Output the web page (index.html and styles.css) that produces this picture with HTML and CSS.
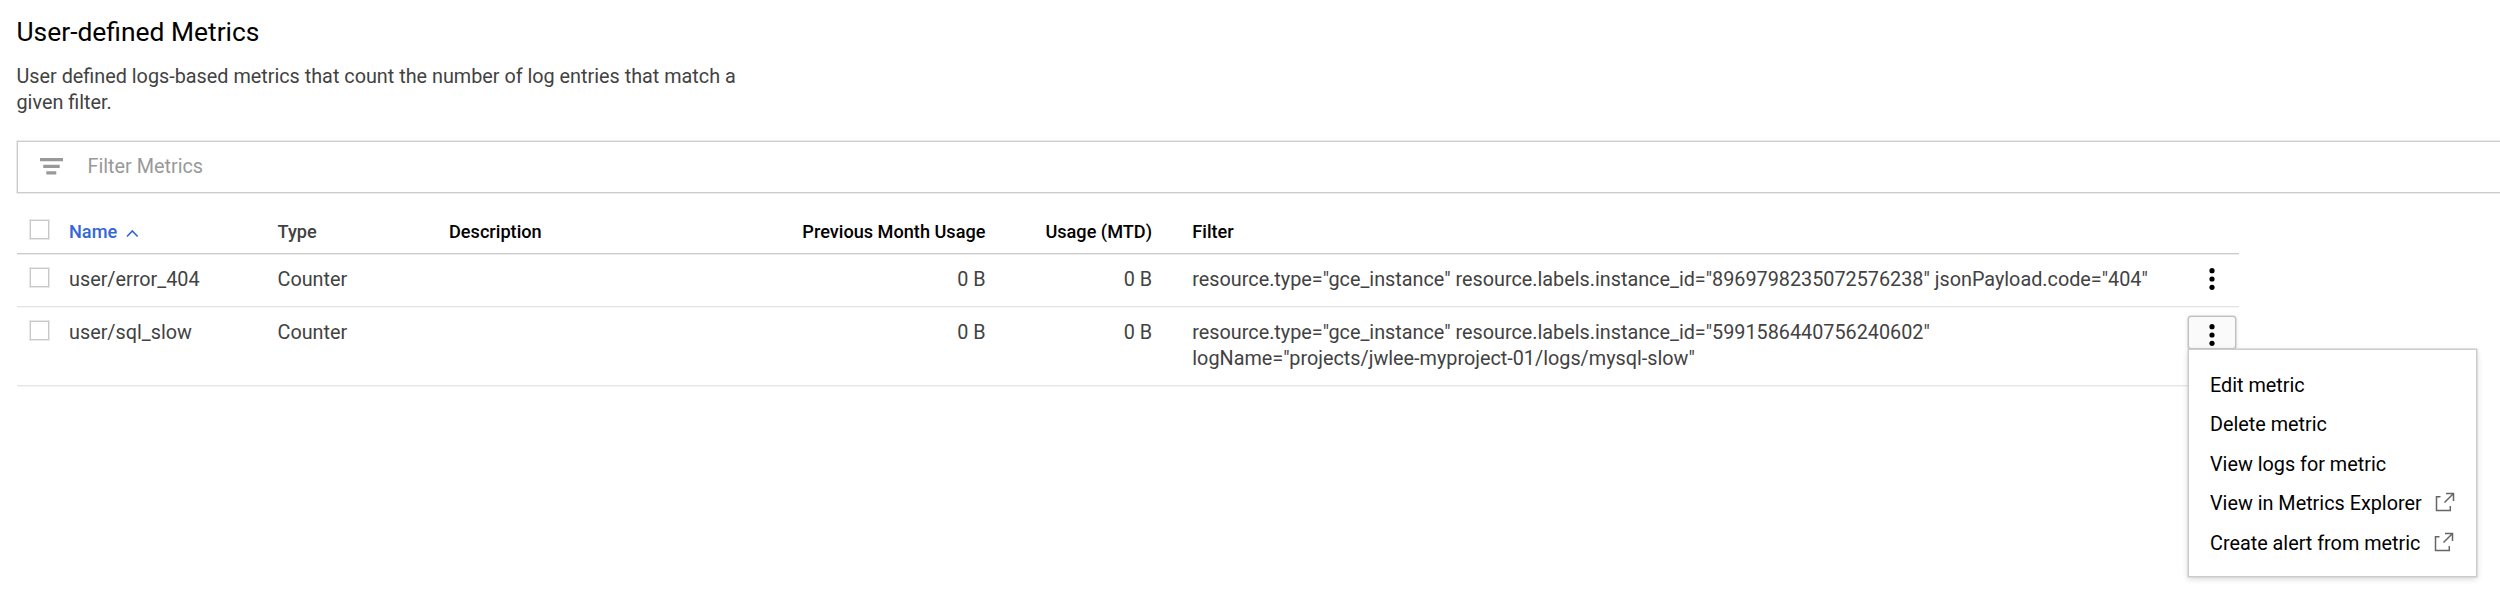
FILE: index.html
```
<!DOCTYPE html>
<html lang="en">
<head>
<meta charset="utf-8">
<title>User-defined Metrics</title>
<link rel="stylesheet" href="styles.css">
</head>
<body>
<main class="page">
  <h1 class="title">User-defined Metrics</h1>
  <p class="intro">User defined logs-based metrics that count the number of log entries that match a given filter.</p>
  <div class="filter-bar">
    <svg class="filter-icon" width="24" height="18" viewBox="0 0 24 18"><path d="M0 0h23v3.200H0zM3.200 6.700h16.500v3.200H3.200zM6.300 13.200h10v3.200h-10z" fill="#999"/></svg>
    <span class="placeholder">Filter Metrics</span>
  </div>
  <section class="table">
    <div class="row head">
      <span class="check"></span>
      <span class="sorted">Name <svg class="caret" width="13" height="9" viewBox="0 0 13 9"><path d="M1 7.500 6.300 2l5.300 5.500" fill="none" stroke="#3367d6" stroke-width="1.700"/></svg></span>
      <span class="type">Type</span>
      <span>Description</span>
      <span class="num">Previous Month Usage</span>
      <span class="num">Usage (MTD)</span>
      <span class="query">Filter</span>
    </div>
    <div class="row first">
      <span class="check"></span>
      <span>user/error_404</span>
      <span>Counter</span>
      <span></span>
      <span class="num">0 B</span>
      <span class="num">0 B</span>
      <span class="query">resource.type="gce_instance" resource.labels.instance_id="8969798235072576238" jsonPayload.code="404"</span>
      <span class="more"><svg width="8" height="24" viewBox="0 0 8 24"><circle cx="4" cy="3.700" r="2.600"/><circle cx="4" cy="12" r="2.600"/><circle cx="4" cy="20.300" r="2.600"/></svg></span>
    </div>
    <div class="row second">
      <span class="check"></span>
      <span>user/sql_slow</span>
      <span>Counter</span>
      <span></span>
      <span class="num">0 B</span>
      <span class="num">0 B</span>
      <span class="query">resource.type="gce_instance" resource.labels.instance_id="5991586440756240602"<br>logName="projects/jwlee-myproject-01/logs/mysql-slow"</span>
      <div class="more open">
        <svg width="8" height="24" viewBox="0 0 8 24"><circle cx="4" cy="3.700" r="2.600"/><circle cx="4" cy="12" r="2.600"/><circle cx="4" cy="20.300" r="2.600"/></svg>
        <div class="menu">
          <div class="item">Edit metric</div>
          <div class="item">Delete metric</div>
          <div class="item">View logs for metric</div>
          <div class="item">View in Metrics Explorer<svg class="ext" width="20" height="20" viewBox="0 0 20 20"><path d="M5.500 4.700H1.500v13.800h13.800V14M11 1.500h7.500V9M18.500 1.500 9.500 10.500" fill="none" stroke="#666" stroke-width="1.500"/></svg></div>
          <div class="item">Create alert from metric<svg class="ext" width="20" height="20" viewBox="0 0 20 20"><path d="M5.500 4.700H1.500v13.800h13.800V14M11 1.500h7.500V9M18.500 1.500 9.500 10.500" fill="none" stroke="#666" stroke-width="1.500"/></svg></div>
        </div>
      </div>
    </div>
  </section>
</main>
</body>
</html>
```
FILE: styles.css
```
* { box-sizing: border-box; }
body {
  margin: 0;
  width: 2500px;
  height: 603px;
  overflow: hidden;
  background: #fff;
  color: #424242;
  font: 19.81px/26.4px Roboto, sans-serif;
}
.page { padding: 16px 0 0 16.5px; }
.title {
  margin: 0;
  height: 47.5px;
  color: #000;
  font-size: 26.4px;
  font-weight: 400;
  line-height: 33px;
}
.intro { margin: 0; width: 745px; }
.filter-bar {
  display: flex;
  align-items: center;
  height: 52px;
  margin: 24.5px 0 0;
  padding-left: 22px;
  border: 1px solid #ccc;
  border-right: 0;
  box-shadow: 0 0 0 1px #ececec;
}
.placeholder { margin-left: 24px; color: #999; }
.table { width: 2222px; margin-top: 7.5px; }
.row {
  display: grid;
  grid-template-columns: 52.5px 208.5px 171.5px 300px 236.5px 166.5px 995.5px 91px;
  align-items: start;
  border-bottom: 1px solid #e4e4e4;
  box-shadow: 0 1px #f5f5f5;
}
.head {
  height: 54px;
  padding-top: 19px;
  border-color: #ccc;
  box-shadow: 0 1px #ececec;
  color: #000;
  font-size: 18.15px;
  font-weight: 500;
}
.first { height: 53px; padding-top: 12.5px; }
.second { height: 79px; padding-top: 12.5px; }
.check {
  width: 19px;
  height: 19px;
  margin-left: 13.5px;
  margin-top: 1px;
  border: 1px solid #c8c8c8;
  box-shadow: 0 0 0 1px #e8e8e8;
}
.sorted { color: #3367d6; }
.caret { margin-left: 4px; }
.type { color: #424242; }
.num { text-align: right; }
.query { padding-left: 40.3px; white-space: nowrap; }
.more {
  display: flex;
  justify-content: center;
  width: 48px;
  margin-left: 40.5px;
}
.more svg { display: block; flex: none; }
.open {
  position: relative;
  height: 33px;
  margin-top: -4px;
  padding-top: 6px;
  border: 1px solid #c0c0c0;
  border-radius: 3px;
  background: #fafafa;
  box-shadow: 0 0 0 .5px #ccc, 0 1px 4px rgba(0, 0, 0, .15);
}
.menu {
  position: absolute;
  top: 32px;
  left: -1px;
  width: 289px;
  height: 228px;
  padding: 16.2px 0 0 21px;
  border: 1px solid #ccc;
  background: #fff;
  color: #000;
  box-shadow: 0 0 0 .5px #ccc, 0 2px 6px rgba(0, 0, 0, .16);
}
.item {
  display: flex;
  align-items: center;
  height: 39.6px;
  white-space: nowrap;
}
.menu .ext { margin: -5px 0 0 13.5px; }
```
